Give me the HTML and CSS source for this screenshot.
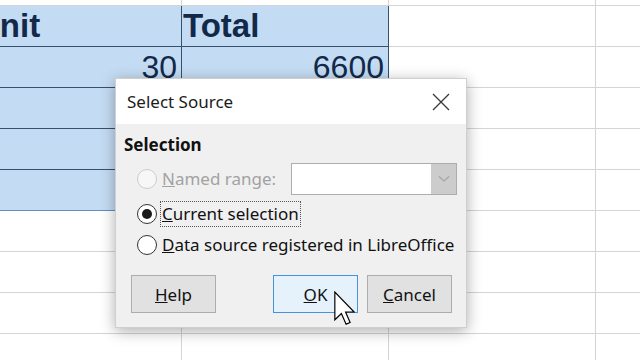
FILE: index.html
```html
<!DOCTYPE html>
<html>
<head>
<meta charset="utf-8">
<link rel="stylesheet" href="styles.css">
</head>
<body>
<div class="sheet">
  <div class="cell"></div><div class="cell"></div><div class="cell"></div><div class="cell"></div>
  <div class="cell sel head">Unit</div><div class="cell sel head">Total</div><div class="cell"></div><div class="cell"></div>
  <div class="cell sel num">30</div><div class="cell sel num">6600</div><div class="cell"></div><div class="cell"></div>
  <div class="cell sel"></div><div class="cell sel"></div><div class="cell"></div><div class="cell"></div>
  <div class="cell sel"></div><div class="cell sel"></div><div class="cell"></div><div class="cell"></div>
  <div class="cell sel sel-last"></div><div class="cell sel sel-last"></div><div class="cell"></div><div class="cell"></div>
  <div class="cell"></div><div class="cell"></div><div class="cell"></div><div class="cell"></div>
  <div class="cell"></div><div class="cell"></div><div class="cell"></div><div class="cell"></div>
  <div class="cell"></div><div class="cell"></div><div class="cell"></div><div class="cell"></div>
  <div class="cell"></div><div class="cell"></div><div class="cell"></div><div class="cell"></div>
</div>

<div class="dialog">
  <div class="titlebar">
    <span class="title">Select Source</span>
    <svg class="close" width="18" height="18" viewBox="0 0 18 18"><path d="M1 1 L17 17 M17 1 L1 17" stroke="#3a3a3a" stroke-width="1.3" fill="none"/></svg>
  </div>
  <div class="body">
    <div class="group-label">Selection</div>
    <div class="row row-named">
      <span class="radio disabled"></span>
      <span class="label disabled-text"><u>N</u>amed range:</span>
      <span class="combo"><span class="combo-field"></span><span class="combo-btn"><svg width="12" height="8" viewBox="0 0 12 8"><path d="M1 1.5 L6 6 L11 1.5" stroke="#a5a5a5" stroke-width="1.2" fill="none"/></svg></span></span>
    </div>
    <div class="row row-current">
      <span class="radio checked"></span>
      <span class="label focus"><u>C</u>urrent selection</span>
    </div>
    <div class="row row-data">
      <span class="radio"></span>
      <span class="label"><u>D</u>ata source registered in LibreOffice</span>
    </div>
    <div class="buttons">
      <button class="btn"><u>H</u>elp</button>
      <span class="spacer"></span>
      <button class="btn default"><u>O</u>K</button>
      <button class="btn"><u>C</u>ancel</button>
    </div>
  </div>
</div>

<svg class="cursor" width="21" height="34" viewBox="0 0 12.5 20"><path d="M0.5 0.5 L0.5 17 L4.4 13.3 L7.2 19.6 L9.6 18.6 L6.9 12.4 L12 12.4 Z" fill="#fff" stroke="#000" stroke-width="0.7" stroke-linejoin="miter"/></svg>
</body>
</html>
```

FILE: styles.css
```css
html, body {
  margin: 0;
  padding: 0;
}
body {
  width: 640px;
  height: 360px;
  overflow: hidden;
  background: #ffffff;
  position: relative;
  font-family: "Noto Sans", "Open Sans", sans-serif;
}

/* spreadsheet */
.sheet {
  display: grid;
  grid-template-columns: repeat(4, 207px);
  grid-auto-rows: 41px;
  width: 828px;
  margin: -35px 0 0 -25px;
  font-family: "Liberation Sans", Arial, sans-serif;
  color: #12294a;
}
.cell {
  box-sizing: border-box;
  border-right: 1px solid #d4d4d4;
  border-bottom: 1px solid #d4d4d4;
  white-space: nowrap;
  overflow: hidden;
}
.sel {
  background: #c4dcf3;
  border-right-color: #34516f;
  border-bottom-color: #34516f;
}
.sel-last {
  border-bottom-color: #5d8fc4;
}
.head {
  font-weight: bold;
  font-size: 33px;
  line-height: 40px;
  padding-left: 1px;
}
.num {
  font-size: 32px;
  line-height: 41px;
  text-align: right;
  padding-right: 4px;
}

/* dialog */
.dialog {
  position: absolute;
  left: 115px;
  top: 78px;
  width: 352px;
  height: 250px;
  box-sizing: border-box;
  border: 1px solid #cfcfcf;
  background: #f0f0f0;
  box-shadow: 0 3px 14px rgba(0, 0, 0, 0.32);
  display: flex;
  flex-direction: column;
}
.titlebar {
  height: 45px;
  flex: none;
  background: #ffffff;
  display: flex;
  align-items: center;
  justify-content: space-between;
  padding: 0 16px 0 11px;
}
.title {
  font-size: 17px;
  color: #1b1b1b;
}
.close {
  display: block;
}
.body {
  flex: 1;
  display: flex;
  flex-direction: column;
  padding: 9px 9px 0 8px;
  font-size: 17px;
  color: #111;
}
.group-label {
  font-weight: bold;
  font-size: 17px;
  line-height: 24px;
  height: 24px;
}
.row {
  display: flex;
  align-items: center;
  padding-left: 13px;
}
.row-named {
  height: 32px;
  margin-top: 6px;
}
.row-current {
  height: 26px;
  margin-top: 6px;
}
.row-data {
  height: 26px;
  margin-top: 5px;
}
.radio {
  width: 20px;
  height: 20px;
  box-sizing: border-box;
  border: 1px solid #333;
  border-radius: 50%;
  background: #fff;
  margin-right: 3px;
  flex: none;
  display: flex;
  align-items: center;
  justify-content: center;
}
.radio.disabled {
  border-color: #cccccc;
  background: #f7f7f7;
}
.radio.checked::after {
  content: "";
  width: 10px;
  height: 10px;
  border-radius: 50%;
  background: #1a1a1a;
}
.label {
  border: 1px dotted transparent;
  padding: 0 1px;
  line-height: 24px;
  white-space: nowrap;
}
.label.focus {
  border-color: #555;
}
.disabled-text {
  color: #a2a2a2;
}
.combo {
  margin-left: auto;
  width: 166px;
  height: 32px;
  box-sizing: border-box;
  border: 1px solid #adadad;
  display: flex;
  background: #fff;
}
.combo-field {
  flex: 1;
}
.combo-btn {
  width: 25px;
  background: #cccccc;
  display: flex;
  align-items: center;
  justify-content: center;
}
.buttons {
  display: flex;
  align-items: center;
  gap: 9px;
  margin-top: 17px;
  padding: 0 5px 0 7px;
}
.spacer {
  flex: 1;
}
.btn {
  width: 85px;
  height: 38px;
  box-sizing: border-box;
  border: 1px solid #adadad;
  background: #e1e1e1;
  font-family: "Noto Sans", "Open Sans", sans-serif;
  font-size: 17px;
  color: #111;
  padding: 0;
  margin: 0;
}
.btn.default {
  background: #e5f1fb;
  border-color: #4594d9;
}

.cursor {
  position: absolute;
  left: 334px;
  top: 291px;
}
```
